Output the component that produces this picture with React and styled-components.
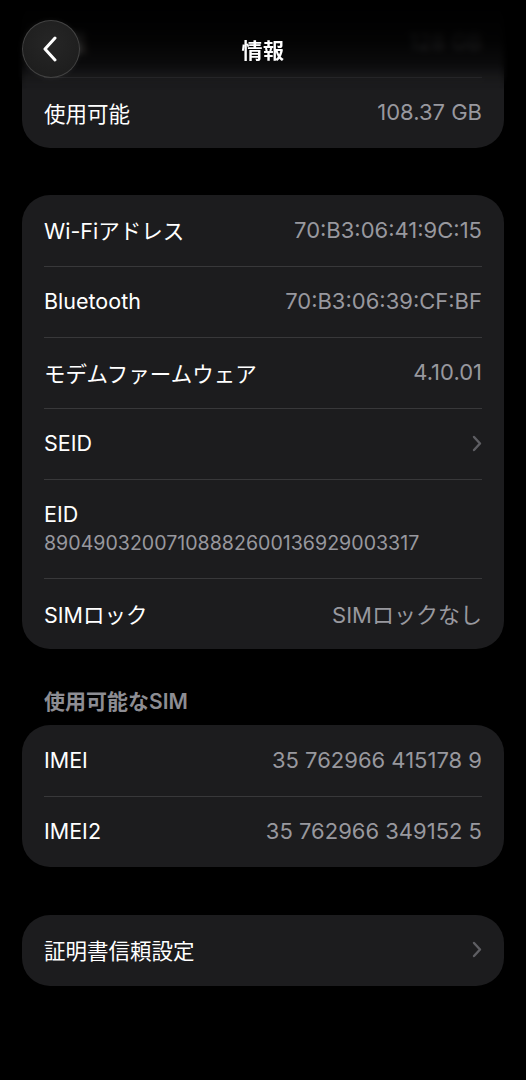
import React from "react"
import styled, { createGlobalStyle } from "styled-components"

const GlobalStyle = createGlobalStyle`
  html, body {
    margin: 0;
    padding: 0;
    background: #000;
  }
  body {
    font-family: Inter, "Noto Sans CJK JP", sans-serif;
    -webkit-font-smoothing: antialiased;
  }
`

const Screen = styled.div`
  position: relative;
  width: 526px;
  height: 1080px;
  overflow: hidden;
  background: #000;
`

const Header = styled.div`
  position: absolute;
  top: 0;
  left: 0;
  right: 0;
  height: 98px;
  display: flex;
  align-items: center;
  justify-content: center;
  z-index: 2;
`

const Scrim = styled.div`
  position: absolute;
  inset: 0 0 8px 0;
  backdrop-filter: blur(3px);
  -webkit-backdrop-filter: blur(3px);
  background: linear-gradient(
    to bottom,
    rgba(0, 0, 0, 1) 0%,
    rgba(0, 0, 0, 0.88) 45%,
    rgba(0, 0, 0, 0.55) 75%,
    rgba(0, 0, 0, 0) 100%
  );
  mask-image: linear-gradient(to bottom, #000 70%, transparent 100%);
`

const BackButton = styled.button`
  position: absolute;
  left: 22px;
  top: 20px;
  width: 58px;
  height: 58px;
  border-radius: 50%;
  border: 1px solid rgba(255, 255, 255, 0.16);
  background: radial-gradient(circle at 50% 40%, #262626 0%, #1b1b1b 100%);
  box-shadow: 0 0 6px rgba(255, 255, 255, 0.06);
  display: flex;
  align-items: center;
  justify-content: center;
  padding: 0;
  box-sizing: border-box;
`

const Title = styled.h1`
  position: relative;
  margin: 0;
  font-size: 21px;
  font-weight: 700;
  color: #fff;
  letter-spacing: 0.5px;
`

const Content = styled.div`
  display: flex;
  flex-direction: column;
  margin-top: -29px;
  padding: 0 22px;
`

const Card = styled.div`
  background: #1c1c1e;
  border-radius: 28px;
  padding: ${(p) => (p.$scrolled ? "35px" : "0")} 22px 0;
  margin-top: ${(p) => p.$gap || 0}px;
`

const Row = styled.div`
  box-sizing: border-box;
  min-height: ${(p) => (p.$tall ? 99 : 71)}px;
  display: flex;
  flex-direction: ${(p) => (p.$tall ? "column" : "row")};
  align-items: ${(p) => (p.$tall ? "flex-start" : "center")};
  justify-content: ${(p) => (p.$tall ? "center" : "space-between")};
  gap: ${(p) => (p.$tall ? "4px" : "12px")};
  padding-bottom: 2px;
  & + & {
    border-top: 1px solid #38383a;
  }
`

const Label = styled.span`
  font-size: 21.5px;
  color: #fff;
  letter-spacing: 0;
`

const Value = styled.span`
  font-size: ${(p) => (p.$small ? 19.6 : 22)}px;
  color: #98989e;
  letter-spacing: 0;
  white-space: nowrap;
`

const SectionTitle = styled.div`
  margin: 41px 22px 11px;
  font-size: 21px;
  font-weight: 600;
  color: #8d8d93;
  line-height: 24px;
`

const BackChevron = () => (
  <svg width="20" height="26" viewBox="0 0 20 26" fill="none">
    <path
      d="M14 2 L4 13 L14 24"
      stroke="#fff"
      strokeWidth="3"
      strokeLinecap="round"
      strokeLinejoin="round"
    />
  </svg>
)

const Disclosure = () => (
  <svg width="10" height="17" viewBox="0 0 10 17" fill="none">
    <path
      d="M2 2 L8 8.5 L2 15"
      stroke="#5e5e63"
      strokeWidth="2.4"
      strokeLinecap="round"
      strokeLinejoin="round"
    />
  </svg>
)

const network = [
  { label: "Wi-Fiアドレス", value: "70:B3:06:41:9C:15" },
  { label: "Bluetooth", value: "70:B3:06:39:CF:BF" },
  { label: "モデムファームウェア", value: "4.10.01" },
]

const App = () => (
  <Screen>
    <GlobalStyle />
    <Header>
      <Scrim />
      <BackButton aria-label="戻る">
        <BackChevron />
      </BackButton>
      <Title>情報</Title>
    </Header>
    <Content>
      <Card $scrolled>
        <Row>
          <Label>容量</Label>
          <Value>128 GB</Value>
        </Row>
        <Row>
          <Label>使用可能</Label>
          <Value>108.37 GB</Value>
        </Row>
      </Card>

      <Card $gap={47}>
        {network.map((r) => (
          <Row key={r.label}>
            <Label>{r.label}</Label>
            <Value>{r.value}</Value>
          </Row>
        ))}
        <Row>
          <Label>SEID</Label>
          <Disclosure />
        </Row>
        <Row $tall>
          <Label>EID</Label>
          <Value $small>89049032007108882600136929003317</Value>
        </Row>
        <Row>
          <Label>SIMロック</Label>
          <Value>SIMロックなし</Value>
        </Row>
      </Card>

      <SectionTitle>使用可能なSIM</SectionTitle>
      <Card>
        <Row>
          <Label>IMEI</Label>
          <Value>35 762966 415178 9</Value>
        </Row>
        <Row>
          <Label>IMEI2</Label>
          <Value>35 762966 349152 5</Value>
        </Row>
      </Card>

      <Card $gap={48}>
        <Row>
          <Label>証明書信頼設定</Label>
          <Disclosure />
        </Row>
      </Card>
    </Content>
  </Screen>
)

export default App
